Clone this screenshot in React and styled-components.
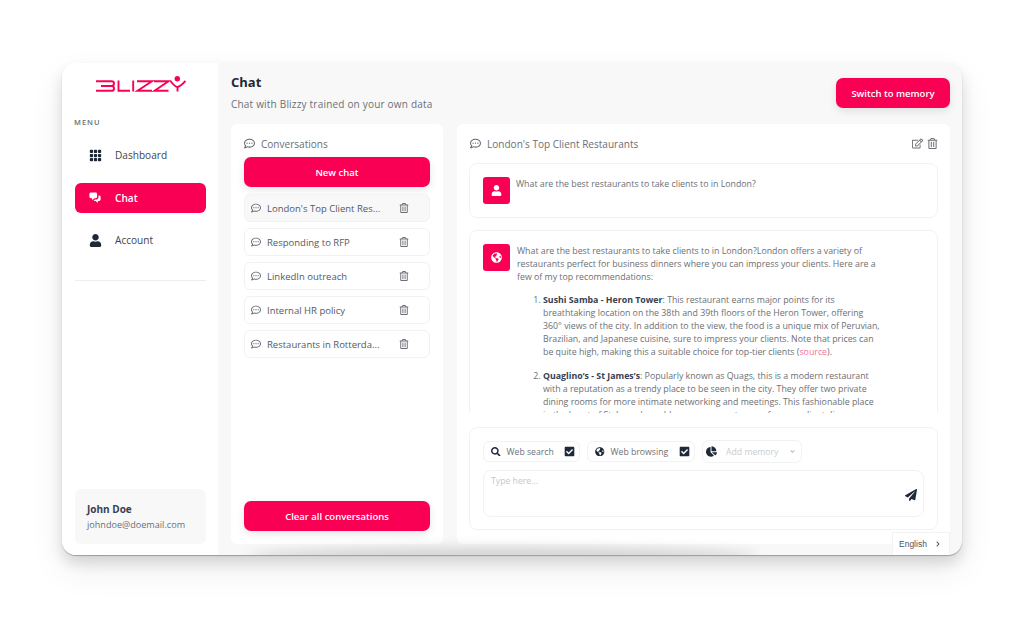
import React from "react";
import styled, { createGlobalStyle } from "styled-components";
import {
  FaChartPie,
  FaCheckSquare,
  FaChevronDown,
  FaChevronRight,
  FaGlobeAmericas,
  FaPaperPlane,
  FaRegCommentDots,
  FaRegEdit,
  FaRegTrashAlt,
  FaSearch,
  FaUser,
} from "react-icons/fa";
import { BsGrid3X3GapFill } from "react-icons/bs";
import { HiChatAlt2 } from "react-icons/hi";

const PINK = "#fa0055";
const NAVY = "#1f2937";
const GREY = "#6c6f75";

const conversations = [
  "London's Top Client Res...",
  "Responding to RFP",
  "LinkedIn outreach",
  "Internal HR policy",
  "Restaurants in Rotterda...",
];

const App = () => {
  return (
    <>
      <GlobalStyles />
      <Page>
        <Window>
          <Sidebar>
            <LogoRow>
              <svg width="90" height="18" viewBox="0 0 90 18" fill="none" stroke={PINK} strokeWidth="1.9" aria-label="Blizzy">
                <path d="M0 6.3H15.5Q18 6.3 18 8.6Q18 11 15.5 11H5M15.5 11Q18 11 18 13.4Q18 15.8 15.5 15.8H0" />
                <path d="M22.5 5.6V15.8H34" />
                <path d="M37.2 5.6V16.5" />
                <path d="M41 6.3H56L41.5 15.8H56" />
                <path d="M58 6.3H72.5L58.5 15.8H72.5" />
                <path d="M74.5 6Q79 12 81.5 12Q84 12 89.5 6M81.5 12V16.5" />
                <circle cx="81.3" cy="3.8" r="2.7" fill={PINK} stroke="none" />
              </svg>
            </LogoRow>
            <MenuLabel>MENU</MenuLabel>
            <Nav>
              <NavItem>
                <NavIcon><BsGrid3X3GapFill /></NavIcon>
                Dashboard
              </NavItem>
              <NavItem $active>
                <NavIcon $active><HiChatAlt2 /></NavIcon>
                Chat
              </NavItem>
              <NavItem>
                <NavIcon><FaUser /></NavIcon>
                Account
              </NavItem>
            </Nav>
            <Divider />
            <UserCard>
              <UserName>John Doe</UserName>
              <UserEmail>johndoe@doemail.com</UserEmail>
            </UserCard>
          </Sidebar>

          <Main>
            <Header>
              <div>
                <Title>Chat</Title>
                <Subtitle>Chat with Blizzy trained on your own data</Subtitle>
              </div>
              <SwitchButton>Switch to memory</SwitchButton>
            </Header>

            <Columns>
              <ConversationPanel>
                <PanelTitle>
                  <FaRegCommentDots />
                  Conversations
                </PanelTitle>
                <PinkButton>New chat</PinkButton>
                <ConversationList>
                  {conversations.map((name, i) => (
                    <ConversationItem key={name} $selected={i === 0}>
                      <FaRegCommentDots />
                      <ConversationName>{name}</ConversationName>
                      <FaRegTrashAlt />
                    </ConversationItem>
                  ))}
                </ConversationList>
                <PinkButton>Clear all conversations</PinkButton>
              </ConversationPanel>

              <ChatPanel>
                <ChatHeader>
                  <PanelTitle>
                    <FaRegCommentDots />
                    London's Top Client Restaurants
                  </PanelTitle>
                  <ChatActions>
                    <FaRegEdit />
                    <FaRegTrashAlt />
                  </ChatActions>
                </ChatHeader>

                <Thread>
                  <Message>
                    <Avatar><FaUser /></Avatar>
                    <Question>What are the best restaurants to take clients to in London?</Question>
                  </Message>
                  <Message>
                    <Avatar><FaGlobeAmericas /></Avatar>
                    <Answer>
                      <p>
                        What are the best restaurants to take clients to in London?London offers a variety of
                        restaurants perfect for business dinners where you can impress your clients. Here are a
                        few of my top recommendations:
                      </p>
                      <ol>
                        <li>
                          <strong>Sushi Samba - Heron Tower</strong>: This restaurant earns major points for its
                          breathtaking location on the 38th and 39th floors of the Heron Tower, offering 360° views
                          of the city. In addition to the view, the food is a unique mix of Peruvian, Brazilian, and
                          Japanese cuisine, sure to impress your clients. Note that prices can be quite high, making
                          this a suitable choice for top-tier clients (<SourceLink>source</SourceLink>).
                        </li>
                        <li>
                          <strong>Quaglino’s - St James’s</strong>: Popularly known as Quags, this is a modern
                          restaurant with a reputation as a trendy place to be seen in the city. They offer two
                          private dining rooms for more intimate networking and meetings. This fashionable place in
                          the heart of St. James's could serve as a great venue for your client dinners.
                        </li>
                      </ol>
                    </Answer>
                  </Message>
                </Thread>

                <Composer>
                  <ChipRow>
                    <Chip $width={97}>
                      <ChipIcon><FaSearch /></ChipIcon>
                      <ChipLabel>Web search</ChipLabel>
                      <CheckIcon><FaCheckSquare /></CheckIcon>
                    </Chip>
                    <Chip $width={108}>
                      <ChipIcon><FaGlobeAmericas /></ChipIcon>
                      <ChipLabel>Web browsing</ChipLabel>
                      <CheckIcon><FaCheckSquare /></CheckIcon>
                    </Chip>
                    <MemorySelect>
                      <ChipIcon><FaChartPie /></ChipIcon>
                      <MemoryLabel>Add memory</MemoryLabel>
                      <FaChevronDown />
                    </MemorySelect>
                  </ChipRow>
                  <InputBox>
                    <Placeholder>Type here...</Placeholder>
                    <SendIcon><FaPaperPlane /></SendIcon>
                  </InputBox>
                </Composer>
              </ChatPanel>
            </Columns>
            <Language>
              English
              <FaChevronRight />
            </Language>
            <BottomShade />
          </Main>
        </Window>
      </Page>
    </>
  );
};

const GlobalStyles = createGlobalStyle`
  html, body {
    margin: 0;
    background: #fff;
    font-family: "Open Sans", "Liberation Sans", sans-serif;
    color: ${NAVY};
  }
  * { box-sizing: border-box; }
`;

const Page = styled.div`
  width: 1024px;
  height: 618px;
  padding: 63px 62px;
  overflow: hidden;
`;

const Window = styled.div`
  display: flex;
  height: 492px;
  border-radius: 14px;
  overflow: hidden;
  background: #f8f8f8;
  box-shadow: 0 1px 1px rgba(0, 0, 0, 0.28), 0 8px 14px rgba(0, 0, 0, 0.12), 0 14px 34px rgba(0, 0, 0, 0.08);
`;

const Sidebar = styled.aside`
  width: 156px;
  flex-shrink: 0;
  display: flex;
  flex-direction: column;
  background: #fff;
  padding: 12px 12px 11px 13px;
`;

const LogoRow = styled.div`
  display: flex;
  justify-content: center;
  height: 18px;
  padding-left: 1px;
`;

const MenuLabel = styled.div`
  margin: 24px 0 0 -1px;
  font-size: 7.5px;
  font-weight: 600;
  letter-spacing: 1px;
  line-height: 11px;
  color: ${GREY};
`;

const Nav = styled.nav`
  display: flex;
  flex-direction: column;
  gap: 12.5px;
  margin-top: 12px;
`;

const NavItem = styled.div`
  display: flex;
  align-items: center;
  height: 30px;
  padding-left: 13px;
  border-radius: 6px;
  font-size: 10.1px;
  font-weight: ${(p) => (p.$active ? 600 : 500)};
  color: ${(p) => (p.$active ? "#fff" : "#41444c")};
  background: ${(p) => (p.$active ? PINK : "transparent")};
`;

const NavIcon = styled.span`
  display: flex;
  justify-content: center;
  width: 14px;
  margin-right: 13px;
  font-size: ${(p) => (p.$active ? 17 : 13)}px;
  color: ${(p) => (p.$active ? "#fff" : NAVY)};
`;

const Divider = styled.div`
  height: 1px;
  margin-top: 25px;
  background: #eeeeee;
`;

const UserCard = styled.div`
  margin-top: auto;
  height: 55px;
  padding: 12px 12px;
  border-radius: 6px;
  background: #f8f8f8;
`;

const UserName = styled.div`
  font-size: 10px;
  font-weight: 700;
  line-height: 16px;
  color: #374151;
`;

const UserEmail = styled.div`
  font-size: 9.1px;
  line-height: 16px;
  color: ${GREY};
`;

const Main = styled.main`
  position: relative;
  flex: 1;
  display: flex;
  flex-direction: column;
  padding: 0 12px 11px 13px;
  min-width: 0;
`;

const Header = styled.header`
  display: flex;
  justify-content: space-between;
  align-items: flex-start;
  height: 61px;
  padding-top: 10px;
`;

const Title = styled.h1`
  margin: 0;
  font-size: 13px;
  font-weight: 700;
  line-height: 18px;
  color: ${NAVY};
`;

const Subtitle = styled.p`
  margin: 4px 0 0;
  font-size: 10px;
  letter-spacing: 0.2px;
  line-height: 18px;
  color: ${GREY};
`;

const PinkButton = styled.button`
  display: block;
  width: 100%;
  flex-shrink: 0;
  height: 30px;
  border: 0;
  border-radius: 7px;
  font-family: inherit;
  font-size: 9.5px;
  font-weight: 600;
  color: #fff;
  background: ${PINK};
  box-shadow: 0 3px 8px rgba(0, 0, 0, 0.1);
`;

const SwitchButton = styled(PinkButton)`
  width: 114px;
  margin-top: 5px;
`;

const Columns = styled.div`
  flex: 1;
  display: flex;
  gap: 14px;
  min-height: 0;
`;

const Panel = styled.section`
  display: flex;
  flex-direction: column;
  border-radius: 6px;
  background: #fff;
`;

const ConversationPanel = styled(Panel)`
  width: 212px;
  flex-shrink: 0;
  padding: 0 13px 13px;
`;

const ChatPanel = styled(Panel)`
  flex: 1;
  min-width: 0;
  padding: 0 12px 14px 12px;
`;

const PanelTitle = styled.div`
  display: flex;
  align-items: center;
  gap: 6px;
  height: 33px;
  padding-top: 6px;
  font-size: 10.05px;
  color: ${GREY};

  svg {
    font-size: 11px;
  }
`;

const ConversationList = styled.div`
  flex: 1;
  display: flex;
  flex-direction: column;
  gap: 6px;
  padding-top: 7px;
`;

const ConversationItem = styled.div`
  display: flex;
  align-items: center;
  height: 28px;
  padding: 0 20px 0 6px;
  border: 1px solid #f2f2f2;
  border-radius: 6px;
  background: ${(p) => (p.$selected ? "#f8f8f8" : "#fff")};
  color: ${GREY};

  svg {
    flex-shrink: 0;
    font-size: 10px;
  }
`;

const ConversationName = styled.span`
  flex: 1;
  margin-left: 6px;
  font-size: 9.5px;
  white-space: nowrap;
  color: #55585f;
`;

const ChatHeader = styled.div`
  display: flex;
  justify-content: space-between;
  height: 39px;
  padding-left: 1px;
`;

const ChatActions = styled.div`
  display: flex;
  align-items: center;
  gap: 4px;
  height: 39px;
  color: ${GREY};
  font-size: 11px;
`;

const Thread = styled.div`
  flex: 1;
  min-height: 0;
  display: flex;
  flex-direction: column;
  gap: 12px;
  overflow: hidden;
`;

const Message = styled.article`
  display: flex;
  flex-shrink: 0;
  min-height: 54px;
  padding: 13px 56px 13px 13px;
  border: 1px solid #f2f2f2;
  border-radius: 8px;
`;

const Avatar = styled.div`
  display: flex;
  align-items: center;
  justify-content: center;
  flex-shrink: 0;
  width: 27px;
  height: 27px;
  margin-right: 6px;
  border-radius: 3px;
  font-size: 11px;
  color: #fff;
  background: ${PINK};
`;

const Question = styled.div`
  padding-top: 1px;
  font-size: 8.8px;
  line-height: 13px;
  color: ${GREY};
`;

const Answer = styled.div`
  padding: 1px 0 0 1px;
  font-size: 8.8px;
  line-height: 13.2px;
  color: ${GREY};

  p {
    margin: 0 0 9px;
  }

  ol {
    margin: 0;
    padding-left: 26px;
  }

  li {
    margin-bottom: 10px;
  }

  strong {
    font-weight: 700;
    color: #374151;
  }
`;

const SourceLink = styled.span`
  color: #fb6f9c;
`;

const Composer = styled.div`
  flex-shrink: 0;
  height: 103px;
  margin-top: 14px;
  padding: 12px 13px;
  border: 1px solid #f2f2f2;
  border-radius: 8px;
`;

const ChipRow = styled.div`
  display: flex;
  align-items: center;
  gap: 7px;
  height: 23px;
`;

const Chip = styled.div`
  display: flex;
  align-items: center;
  width: ${(p) => p.$width}px;
  height: 21px;
  padding: 0 4px 0 7px;
  border: 1px solid #f2f2f2;
  border-radius: 6px;
`;

const ChipIcon = styled.span`
  display: flex;
  flex-shrink: 0;
  font-size: 9.5px;
  color: ${NAVY};
`;

const ChipLabel = styled.span`
  flex: 1;
  margin-left: 6px;
  font-size: 8.7px;
  white-space: nowrap;
  color: ${GREY};
`;

const CheckIcon = styled.span`
  display: flex;
  flex-shrink: 0;
  font-size: 11px;
  color: ${NAVY};
`;

const MemorySelect = styled.div`
  display: flex;
  align-items: center;
  width: 100px;
  height: 23px;
  padding: 0 6px 0 3px;
  border: 1px solid #f2f2f2;
  border-radius: 6px;
  color: #b6bac1;

  > svg {
    font-size: 5px;
    color: #9ca3af;
  }

  ${ChipIcon} {
    font-size: 11px;
  }
`;

const MemoryLabel = styled.span`
  flex: 1;
  margin-left: 9px;
  font-size: 8.7px;
  color: #c9ccd1;
`;

const InputBox = styled.div`
  display: flex;
  justify-content: space-between;
  height: 47px;
  margin-top: 7px;
  padding: 4px 6px 0 7px;
  border: 1px solid #f2f2f2;
  border-radius: 8px;
`;

const Placeholder = styled.span`
  font-size: 8.7px;
  line-height: 12px;
  color: #c4c7cc;
`;

const SendIcon = styled.span`
  display: flex;
  align-self: center;
  margin-top: -2px;
  font-size: 12px;
  color: ${NAVY};
`;

const Language = styled.div`
  position: absolute;
  right: 12px;
  bottom: 0;
  display: flex;
  align-items: center;
  justify-content: space-between;
  width: 58px;
  height: 23px;
  padding: 0 8px 0 6px;
  border: 1px solid #f2f2f2;
  border-bottom: 0;
  font-family: "Liberation Sans", sans-serif;
  font-size: 8.5px;
  color: #4b5563;
  background: #fff;

  svg {
    font-size: 6px;
  }
`;

const BottomShade = styled.div`
  position: absolute;
  left: 30px;
  bottom: -10px;
  width: 510px;
  height: 18px;
  border-radius: 50%;
  background: rgba(0, 0, 0, 0.14);
  filter: blur(6px);
  pointer-events: none;
`;

export default App;
